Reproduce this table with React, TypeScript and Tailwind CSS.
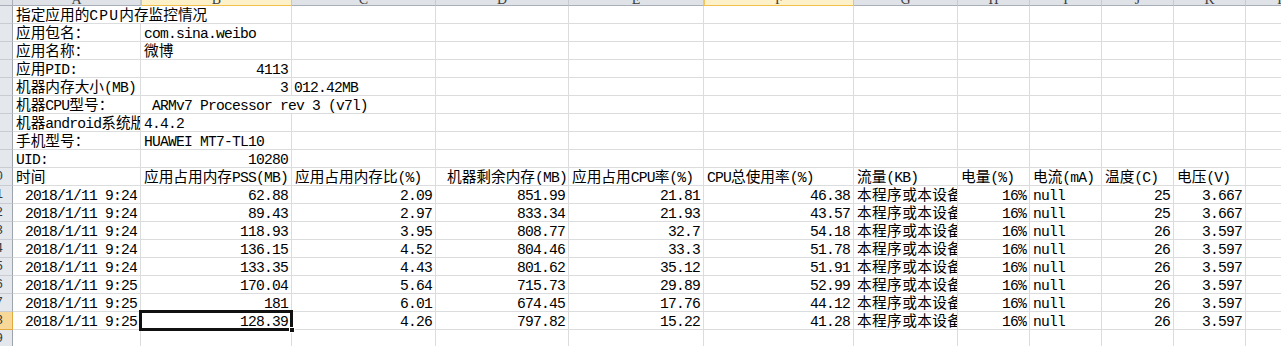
import React from 'react';

const WC = ['w-[128px]', 'w-[151px]', 'w-[144px]', 'w-[133px]', 'w-[135px]', 'w-[150px]', 'w-[104px]', 'w-[72px]', 'w-[72px]', 'w-[72px]', 'w-[72px]', 'w-[72px]'];
const LETTERS = ['A', 'B', 'C', 'D', 'E', 'F', 'G', 'H', 'I', 'J', 'K', 'L'];
const HILITE_COLS = [1, 5];

type C = { t?: string; r?: boolean; ov?: boolean; tight?: boolean; wide?: boolean; spread?: boolean };

function Txt({ s, wide }: { s: string; wide?: boolean }) {
  const parts = s.match(/[\x20-\x7e]+|[^\x20-\x7e]+/g) || [];
  return (
    <>
      {parts.map((p, i) =>
        /^[\x20-\x7e]+$/.test(p) ? (
          <span
            key={i}
            className={
              "font-['Liberation_Mono',monospace] leading-none " + (wide ? 'tracking-[1.2px]' : 'tracking-[-0.8px]')
            }
          >
            {p}
          </span>
        ) : (
          <span key={i}>{p}</span>
        )
      )}
    </>
  );
}

function Cell({ i, c }: { i: number; c?: C }) {
  const ov = c?.ov;
  const r = c?.r;
  const cls = [
    WC[i],
    'h-[18px] shrink-0 border-b border-[#dadcdd] whitespace-pre leading-[16px]',
    ov ? 'overflow-visible' : 'overflow-hidden border-r',
    r ? 'text-right pr-[3px]' : c?.tight ? 'pl-[2px]' : 'pl-[3px]',
    c?.spread ? 'tracking-[0.4px]' : '',
  ].join(' ');
  return <div className={cls}>{c?.t ? <Txt s={c.t} wide={c.wide} /> : null}</div>;
}

function RowHead({ n, hl }: { n: number; hl?: boolean }) {
  return (
    <div
      className={
        'w-[13px] h-[18px] shrink-0 border-r border-b flex justify-end overflow-hidden ' +
        (hl ? 'bg-[#f8d898] border-r-[#e2a93c] border-b-[#e2a93c]' : 'bg-[#e4e7eb] border-r-[#9ea4ab] border-b-[#c9cdd3]')
      }
    >
      {n >= 10 ? (
        <span className="shrink-0 pr-[9px] font-['Liberation_Mono',monospace] text-[13px] leading-[17px] text-[#3a3a3a]">
          {n}
        </span>
      ) : null}
    </div>
  );
}

const top: C[][] = [
  [{ t: '指定应用的', ov: true }],
  [{ t: '应用包名：' }, { t: 'com.sina.weibo' }],
  [{ t: '应用名称：' }, { t: '微博' }],
  [{ t: '应用PID:' }, { t: '4113', r: true }],
  [{ t: '机器内存大小(MB)' }, { t: '3', r: true }, { t: '012.42MB', tight: true }],
  [{ t: '机器CPU型号：' }, { t: ' ARMv7 Processor rev 3 (v7l)', ov: true }],
  [{ t: '机器android系统版本：' }, { t: '4.4.2' }],
  [{ t: '手机型号：' }, { t: 'HUAWEI MT7-TL10' }],
  [{ t: 'UID:' }, { t: '10280', r: true }],
  [
    { t: '时间' },
    { t: '应用占用内存PSS(MB)' },
    { t: '应用占用内存比(%)' },
    { t: ' 机器剩余内存(MB)' },
    { t: '应用占用CPU率(%)' },
    { t: 'CPU总使用率(%)' },
    { t: '流量(KB)' },
    { t: '电量(%)' },
    { t: '电流(mA)' },
    { t: '温度(C)' },
    { t: '电压(V)' },
  ],
];

const data = [
  ['2018/1/11 9:24', '62.88', '2.09', '851.99', '21.81', '46.38', '25', '3.667'],
  ['2018/1/11 9:24', '89.43', '2.97', '833.34', '21.93', '43.57', '25', '3.667'],
  ['2018/1/11 9:24', '118.93', '3.95', '808.77', '32.7', '54.18', '26', '3.597'],
  ['2018/1/11 9:24', '136.15', '4.52', '804.46', '33.3', '51.78', '26', '3.597'],
  ['2018/1/11 9:24', '133.35', '4.43', '801.62', '35.12', '51.91', '26', '3.597'],
  ['2018/1/11 9:25', '170.04', '5.64', '715.73', '29.89', '52.99', '26', '3.597'],
  ['2018/1/11 9:25', '181', '6.01', '674.45', '17.76', '44.12', '26', '3.597'],
  ['2018/1/11 9:25', '128.39', '4.26', '797.82', '15.22', '41.28', '26', '3.597'],
];

const dataRows: C[][] = data.map((d) => [
  { t: d[0], r: true },
  { t: d[1], r: true },
  { t: d[2], r: true },
  { t: d[3], r: true },
  { t: d[4], r: true },
  { t: d[5], r: true },
  { t: '本程序或本设备', spread: true },
  { t: '16%', r: true },
  { t: 'null' },
  { t: d[6], r: true },
  { t: d[7], r: true },
]);

const rows: C[][] = [...top, ...dataRows, []];

function TitleCell() {
  return (
    <div className="w-[128px] h-[18px] shrink-0 border-b border-[#dadcdd] whitespace-pre leading-[16px] overflow-visible pl-[3px]">
      <span>指定应用的</span>
      <span className="font-['Liberation_Mono',monospace] leading-none tracking-[1.2px]">CPU</span>
      <span>内存监控情况</span>
    </div>
  );
}

export default function App() {
  return (
    <div className="relative w-[1281px] h-[346px] overflow-hidden bg-white text-black font-['Noto_Sans_CJK_SC',sans-serif] text-[14.67px]">
      {/* column header row */}
      <div className="flex h-[6px]">
        <div className="w-[13px] h-[6px] shrink-0 bg-[#dfe3e8] border-r border-b border-[#a9afb8]" />
        {LETTERS.map((l, i) => {
          const hl = HILITE_COLS.includes(i);
          return (
            <div
              key={l}
              className={
                WC[i] +
                ' h-[6px] shrink-0 border-r border-b overflow-hidden flex items-end justify-center ' +
                (hl
                  ? 'bg-[#fdf1c9] border-b-[#f0bf4c] border-r-[#f0c75e] border-l border-l-[#f0c75e]'
                  : 'bg-[#dfe3e8] border-b-[#a9afb8] border-r-[#c6cbd2]')
              }
            >
              <span className="font-['Liberation_Serif',serif] text-[14px] leading-none mb-[-2px] text-[#3d3d3d]">{l}</span>
            </div>
          );
        })}
      </div>
      {rows.map((row, ri) => (
        <div key={ri} className="flex h-[18px]">
          <RowHead n={ri + 1} hl={ri === 17} />
          {WC.map((_, ci) =>
            ri === 0 && ci === 0 ? <TitleCell key={ci} /> : <Cell key={ci} i={ci} c={row[ci]} />
          )}
        </div>
      ))}
      {/* active cell selection */}
      <div className="absolute left-[139px] top-[310px] w-[154px] h-[21px] border-[3px] border-[#111]" />
      <div className="absolute left-[289px] top-[327px] w-[6px] h-[6px] bg-[#111] border border-white" />
    </div>
  );
}
